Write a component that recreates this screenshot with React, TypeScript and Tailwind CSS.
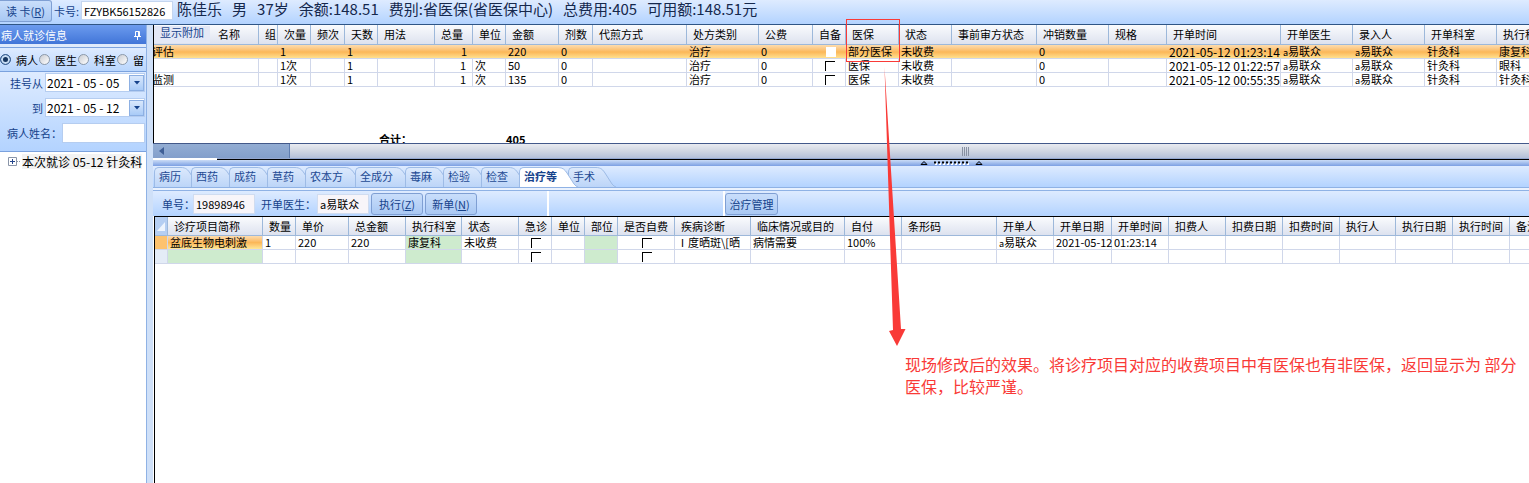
import React from 'react';
import clsx from 'clsx';

interface Column {
  title: string;
  width: number;
}

const feeColumns: Column[] = [
  { title: '名称', width: 105 },
  { title: '组', width: 19 },
  { title: '次量', width: 33 },
  { title: '频次', width: 34 },
  { title: '天数', width: 33 },
  { title: '用法', width: 57 },
  { title: '总量', width: 38 },
  { title: '单位', width: 33 },
  { title: '金额', width: 53 },
  { title: '剂数', width: 34 },
  { title: '代煎方式', width: 94 },
  { title: '处方类别', width: 72 },
  { title: '公费', width: 54 },
  { title: '自备', width: 33 },
  { title: '医保', width: 53 },
  { title: '状态', width: 53 },
  { title: '事前审方状态', width: 85 },
  { title: '冲销数量', width: 72 },
  { title: '规格', width: 58 },
  { title: '开单时间', width: 114 },
  { title: '开单医生', width: 72 },
  { title: '录入人', width: 72 },
  { title: '开单科室', width: 72 },
  { title: '执行科室', width: 72 },
];

const feeRows: string[][] = [
  ['评估', '', '1', '', '1', '', '1', '', '220', '0', '', '治疗', '0', 'check', '部分医保', '未收费', '', '0', '', '2021-05-12 01:23:14', 'a易联众', 'a易联众', '针灸科', '康复科'],
  ['', '', '1次', '', '1', '', '1', '次', '50', '0', '', '治疗', '0', 'check', '医保', '未收费', '', '0', '', '2021-05-12 01:22:57', 'a易联众', 'a易联众', '针灸科', '眼科'],
  ['监测', '', '1次', '', '1', '', '1', '次', '135', '0', '', '治疗', '0', 'check', '医保', '未收费', '', '0', '', '2021-05-12 00:55:35', 'a易联众', 'a易联众', '针灸科', '针灸科'],
];

const itemColumns: Column[] = [
  { title: '', width: 13 },
  { title: '诊疗项目简称', width: 95 },
  { title: '数量', width: 33 },
  { title: '单价', width: 53 },
  { title: '总金额', width: 57 },
  { title: '执行科室', width: 56 },
  { title: '状态', width: 57 },
  { title: '急诊', width: 33 },
  { title: '单位', width: 33 },
  { title: '部位', width: 33 },
  { title: '是否自费', width: 57 },
  { title: '疾病诊断', width: 76 },
  { title: '临床情况或目的', width: 94 },
  { title: '自付', width: 57 },
  { title: '条形码', width: 95 },
  { title: '开单人', width: 57 },
  { title: '开单日期', width: 58 },
  { title: '开单时间', width: 57 },
  { title: '扣费人', width: 57 },
  { title: '扣费日期', width: 57 },
  { title: '扣费时间', width: 57 },
  { title: '执行人', width: 56 },
  { title: '执行日期', width: 57 },
  { title: '执行时间', width: 57 },
  { title: '备注', width: 57 },
];

const itemRows: string[][] = [
  ['', '盆底生物电刺激', '1', '220', '220', '康复科', '未收费', 'check', '', '', 'check', 'Ⅰ度晒斑\\[晒', '病情需要', '100%', '', 'a易联众', '2021-05-12', '01:23:14', '', '', '', '', '', '', ''],
  ['', '', '', '', '', '', '', 'check', '', '', 'check', '', '', '', '', '', '', '', '', '', '', '', '', '', ''],
];

const greenColumns = [1, 5, 9];

const tabs = [
  { title: '病历', width: 'w-[47px]' },
  { title: '西药', width: 'w-12' },
  { title: '成药', width: 'w-12' },
  { title: '草药', width: 'w-12' },
  { title: '农本方', width: 'w-[60px]' },
  { title: '全成分', width: 'w-[60px]' },
  { title: '毒麻', width: 'w-12' },
  { title: '检验', width: 'w-12' },
  { title: '检查', width: 'w-12' },
  { title: '治疗等', width: 'w-[59px]' },
  { title: '手术', width: 'w-12' },
];

const bar = 'bg-linear-to-b from-[#deebff] to-[#b3d3ff]';
const buttonStyle =
  'rounded-[3px] border border-[#7f9fd3] bg-linear-to-b from-[#c9defb] to-[#a9c8f3] text-center whitespace-nowrap text-[#15428b]';

// staff names carry a small "a" prefix
function CellText({ text }: { text: string }) {
  if (!text.startsWith('a')) return <>{text}</>;
  return (
    <>
      <span className="text-[9px] leading-none">a</span>
      {text.slice(1)}
    </>
  );
}

function GridCheck({ label, filled = false }: { label: string; filled?: boolean }) {
  return (
    <input
      type="checkbox"
      aria-label={label}
      className={clsx(
        'mx-auto block size-[10px] appearance-none',
        filled ? 'bg-white' : 'border-t border-l border-black'
      )}
    />
  );
}

function ColGroup({ columns }: { columns: Column[] }) {
  return (
    <colgroup>
      {columns.map((c, i) => (
        <col key={i} style={{ width: c.width }} />
      ))}
    </colgroup>
  );
}

function HeadCell({ children }: { children: React.ReactNode }) {
  return (
    <th className="h-[19px] border-r border-b border-[#9db8da] bg-linear-to-b from-[#fafbfd] to-[#dde2ef] p-0 pl-1.5 text-left font-normal whitespace-nowrap">
      {children}
    </th>
  );
}

function FeeTable() {
  return (
    <table className="w-[1415px] table-fixed border-separate border-spacing-0 leading-[13px]">
      <ColGroup columns={feeColumns} />
      <thead>
        <tr>
          {feeColumns.map((c, i) => (
            <HeadCell key={c.title}>
              {i === 0 ? (
                <div className="-ml-1.5 flex h-[19px] items-center gap-2">
                  <span className="bg-[#e3e8f6] pr-1.5 pb-1 pl-1.5 text-[#15428b]">显示附加</span>
                  {c.title}
                </div>
              ) : (
                c.title
              )}
            </HeadCell>
          ))}
        </tr>
      </thead>
      <tbody>
        {feeRows.map((row, r) => (
          <tr
            key={r}
            className={clsx(r === 0 && 'bg-linear-to-b from-[#fddcae] via-[#fbb758] to-[#ffe796]')}
          >
            {row.map((value, i) => (
              <td
                key={i}
                className={clsx(
                  'h-[14px] border-b border-[#d0d7ea] p-0 whitespace-nowrap',
                  r > 0 && 'border-r',
                  i === 0 && '-indent-0.5',
                  i === 6 && 'pr-1.5 text-right',
                  i === 19 && 'text-xs leading-[13px]',
                  i > 0 && i !== 6 && 'pl-0.5'
                )}
              >
                {value === 'check' ? <GridCheck label="自备" filled={r === 0} /> : <CellText text={value} />}
              </td>
            ))}
          </tr>
        ))}
      </tbody>
    </table>
  );
}

function ItemTable() {
  return (
    <table className="w-[1412px] table-fixed border-separate border-spacing-0 leading-[13px]">
      <ColGroup columns={itemColumns} />
      <thead>
        <tr>
          {itemColumns.map((c, i) =>
            i === 0 ? (
              <th key={i} className="border-r border-b border-[#9db8da] bg-[#b5cef2] p-0">
                <svg viewBox="0 0 12 18" className="block h-[18px] w-3" aria-hidden="true">
                  <path d="M10 5v9H2z" fill="#eef4fd" />
                </svg>
              </th>
            ) : (
              <HeadCell key={i}>{c.title}</HeadCell>
            )
          )}
        </tr>
      </thead>
      <tbody>
        {itemRows.map((row, r) => (
          <tr key={r}>
            {row.map((value, i) => (
              <td
                key={i}
                className={clsx(
                  'h-[14px] border-r border-b border-[#d0d7ea] p-0 pl-0.5 whitespace-nowrap',
                  i === 0 && (r === 0 ? 'bg-[#fdc26e]' : 'bg-[#e4ecf7]'),
                  i === 1 && r === 0 && 'bg-linear-to-b from-[#fddcae] via-[#fbb758] to-[#ffe796]',
                  greenColumns.includes(i) && !(i === 1 && r === 0) && 'bg-[#ceebce]'
                )}
              >
                {value === 'check' ? (
                  <GridCheck label={itemColumns[i].title} />
                ) : (
                  <CellText text={value} />
                )}
              </td>
            ))}
          </tr>
        ))}
      </tbody>
    </table>
  );
}

function Tab({ title, width, active }: { title: string; width: string; active: boolean }) {
  return (
    <button
      role="tab"
      aria-selected={active}
      className={clsx('-mr-2.5 flex h-5 shrink-0', width, active ? 'relative z-10 font-bold text-[#15428b]' : 'text-[#1d4a94]')}
    >
      <span
        className={clsx(
          'h-5 min-w-0 flex-1 rounded-tl-[5px] border-t border-l border-[#9dbbe6] pl-1 text-left leading-4 whitespace-nowrap',
          active ? 'bg-white' : 'bg-linear-to-b from-[#dce9fc] to-[#bcd5f8]'
        )}
      >
        <span className="relative z-10">{title}</span>
      </span>
      <svg viewBox="0 0 20 20" className="h-5 w-5 shrink-0" aria-hidden="true">
        <defs>
          <linearGradient id="tab-fill" x1="0" y1="0" x2="0" y2="1">
            <stop offset="0" stopColor="#dce9fc" />
            <stop offset="1" stopColor="#bcd5f8" />
          </linearGradient>
        </defs>
        <path d="M0 0.5C5 0.5 7 3 9 6L16 17Q18 19.5 20 20H0z" fill={active ? '#ffffff' : 'url(#tab-fill)'} />
        <path d="M0 0.5C5 0.5 7 3 9 6L16 17Q18 19.5 20 20" fill="none" stroke="#9dbbe6" />
      </svg>
    </button>
  );
}

function DateField({ label, value }: { label: string; value: string }) {
  return (
    <div className="flex h-[19px] items-center justify-end gap-0.5 pr-px">
      <label htmlFor={label} className="text-[#15428b]">{label}</label>
      <div className="flex h-[19px] w-[100px] items-center border border-[#b5cdf0] bg-white">
        <input id={label} defaultValue={value} className="h-[17px] min-w-0 flex-1 pl-px text-xs leading-4 outline-none" />
        <button
          aria-label="选择日期"
          className="flex h-4 w-[15px] items-center justify-center border border-[#8db0e3] bg-linear-to-b from-[#d9e8fc] to-[#a9cbf7]"
        >
          <svg viewBox="0 0 6 4" className="h-1 w-1.5" aria-hidden="true">
            <path d="M0 0h6L3 3.5z" fill="#15428b" />
          </svg>
        </button>
      </div>
    </div>
  );
}

function Sidebar() {
  return (
    <aside className="flex w-[147px] shrink-0 flex-col overflow-hidden border-r border-[#8fb2e5] bg-white">
      <div className="flex h-[19px] items-center justify-between bg-linear-to-b from-[#6c9bee] to-[#4175d8] pr-1 pl-px text-white">
        <span>病人就诊信息</span>
        <svg viewBox="0 0 9 10" className="h-2.5 w-[9px]" fill="none" stroke="currentColor" aria-hidden="true">
          <path d="M2.5 6V1.5H6.5V6M5.5 1.5V6M1 6.5H8M4.5 6.5V10" />
        </svg>
      </div>
      <div className="h-1 border-b border-[#7ba2de] bg-[#dfeafb]" />
      <div className="flex h-6 items-center border-b border-[#7ba2de] bg-linear-to-b from-[#deebff] to-[#b9d6fd] whitespace-nowrap">
        {['病人', '医生', '科室', '留'].map((name) => (
          <label key={name} className="flex w-[39px] shrink-0 items-center gap-[5px]">
            <input
              type="radio"
              name="scope"
              defaultChecked={name === '病人'}
              className="size-[11px] appearance-none rounded-full border border-[#8b98a8] bg-linear-to-br from-[#c9ccd2] to-white checked:border-[#3a6297] checked:bg-[#17365f] checked:bg-none checked:shadow-[inset_0_0_0_2px_#c9def5]"
            />
            {name}
          </label>
        ))}
      </div>
      <div className="flex h-20 flex-col gap-1.5 border-b border-[#7ba2de] bg-linear-to-b from-[#deebff] to-[#b3d3ff] pt-px">
        <DateField label="挂号从" value="2021 - 05 - 05" />
        <DateField label="到" value="2021 - 05 - 12" />
        <div className="flex h-5 items-center justify-end pr-px">
          <label htmlFor="patient-name" className="text-[#15428b]">病人姓名：</label>
          <input id="patient-name" className="h-5 w-[83px] border border-[#b5cdf0] bg-white outline-none" />
        </div>
      </div>
      <div className="flex h-[18px] items-center pl-2 whitespace-nowrap">
        <svg viewBox="0 0 14 9" className="h-[9px] w-3.5 shrink-0" fill="none" aria-hidden="true">
          <path d="M0.5 0.5h8v8h-8z" stroke="#8a95a8" />
          <path d="M2 4.5h5M4.5 2v5" stroke="#26468c" />
          <path d="M9 4.5h4" stroke="#8a95a8" strokeDasharray="1 1" />
        </svg>
        <span className="bg-[#f3f3f3] text-xs leading-[15px]">本次就诊 05-12 针灸科</span>
      </div>
    </aside>
  );
}

function Splitter() {
  return (
    <div className="flex h-1.5 justify-center bg-linear-to-b from-[#cbdcf6] to-[#7c9fe2] pl-[222px]">
      <svg viewBox="0 0 64 6" className="h-1.5 w-16" aria-hidden="true">
        <path d="M1 4.5L4 1.5L7 4.5zM56 4.5L59 1.5L62 4.5z" fill="#7c9fe2" stroke="#000000" />
        <path d="M15 4H49" stroke="#ffffff" strokeWidth="2" strokeDasharray="2 2" />
        <path d="M14 2.5H48" stroke="#000000" strokeWidth="2" strokeDasharray="2 2" />
      </svg>
    </div>
  );
}

export default function App() {
  return (
    <div className="relative flex min-h-screen flex-col overflow-hidden bg-white font-['Noto_Sans_CJK_SC',sans-serif] text-[11px] leading-[14px] text-black">
      <header className={clsx('flex h-[25px] items-start border-b border-[#2f5585] whitespace-nowrap', bar)}>
        <button className={clsx('h-[22px] w-[52px] rounded-l-none border-l-0', buttonStyle)}>
          读 卡(<u>R</u>)
        </button>
        <label htmlFor="card-no" className="pt-1 pl-0.5 text-[#15428b]">卡号:</label>
        <input
          id="card-no"
          defaultValue="FZYBK56152826"
          className="mt-px ml-0.5 h-[19px] w-[92px] border border-[#c4d6f0] bg-white px-0.5 outline-none"
        />
        <div className="flex gap-2.5 pl-1 text-[15px] leading-[18px] text-[#15284d]">
          <span>陈佳乐</span>
          <span>男</span>
          <span>37岁</span>
          <span>余额:148.51</span>
          <span>费别:省医保(省医保中心)</span>
          <span>总费用:405</span>
          <span>可用额:148.51元</span>
        </div>
      </header>

      <div className="flex flex-1">
        <Sidebar />
        <main className="min-w-0 flex-1 overflow-hidden border-l-6 border-[#cfe0f8]">
          <div className="border-l border-black">
            <FeeTable />
            <div className="flex h-14 items-end overflow-hidden font-bold">
              <div className="h-2.5 w-[352px] pl-[225px] leading-3">合计：</div>
              <div className="h-2.5 leading-3">405</div>
            </div>
          </div>
          <div className="flex h-[15px] border-t border-[#43598a]">
            <div className="flex w-[137px] items-center border-r border-[#5f7db0] bg-linear-to-b from-[#93add3] to-[#839fcb] pl-1.5">
              <svg viewBox="0 0 5 8" className="h-2 w-[5px]" aria-hidden="true">
                <path d="M5 0v8L0 4z" fill="#3f5f96" />
              </svg>
            </div>
            <div className="flex flex-1 items-center justify-center bg-linear-to-b from-[#e9ebf0] via-[#d0d6e2] to-[#b4c0d9] pl-[113px]">
              <svg viewBox="0 0 8 9" className="h-[9px] w-2" stroke="#8891a2" aria-hidden="true">
                <path d="M0.5 0v9M2.5 0v9M4.5 0v9M6.5 0v9" />
              </svg>
            </div>
          </div>
          <div className="ml-16 h-0.5 border-b border-black bg-[#93a7d0]" />
          <Splitter />

          <div role="tablist" className={clsx('flex h-[22px] items-end border-b border-[#8fb2e5] pl-px', bar)}>
            {tabs.map((tab) => (
              <Tab key={tab.title} title={tab.title} width={tab.width} active={tab.title === '治疗等'} />
            ))}
          </div>
          <div className="h-[3px] border-b border-[#8fb2e5] bg-[#eaf2fe]" />
          <div className={clsx('flex h-[25px] items-center whitespace-nowrap text-[#15428b]', bar)}>
            <div className="flex h-full w-[396px] items-center border-r-2 border-white pl-[9px]">
              <label htmlFor="order-no" className="w-[31px]">单号：</label>
              <input id="order-no" defaultValue="19898946" className="h-5 w-[62px] border border-[#d0dcf0] bg-[#f8f5f9] pl-0.5 text-black outline-none" />
              <label htmlFor="doctor" className="ml-1.5 w-14">开单医生：</label>
              <input id="doctor" defaultValue="a易联众" className="mr-0.5 h-5 w-[52px] border border-[#d0dcf0] bg-[#f8f5f9] pl-0.5 text-black outline-none" />
              <button className={clsx('mr-0.5 h-[22px] w-[52px]', buttonStyle)}>
                执行(<u>Z</u>)
              </button>
              <button className={clsx('h-[22px] w-[52px]', buttonStyle)}>
                新单(<u>N</u>)
              </button>
            </div>
            <div className="h-full w-44 border-r-2 border-white" />
            <button className={clsx('h-[22px] w-[53px]', buttonStyle)}>治疗管理</button>
          </div>
          <div className="ml-px border-t border-l border-black">
            <ItemTable />
            <div className="h-[219px]" />
          </div>
        </main>
      </div>

      {/* review mark-up drawn over the grids */}
      <div className="pointer-events-none absolute top-[19px] left-[846px] h-[43px] w-[54px] border border-[#f93a37]" />
      <svg viewBox="0 0 30 280" className="pointer-events-none absolute top-[67px] left-[880px] h-[280px] w-[30px]" aria-hidden="true">
        <path d="M4.5 0L21 262L25.5 262L17 279L9 264L13 263z" fill="#f93a37" />
      </svg>
      <p className="absolute top-[353px] right-2 left-[905px] text-base leading-[22px] text-[#f93a37]">
        现场修改后的效果。将诊疗项目对应的收费项目中有医保也有非医保，返回显示为 部分医保，比较严谨。
      </p>
    </div>
  );
}
